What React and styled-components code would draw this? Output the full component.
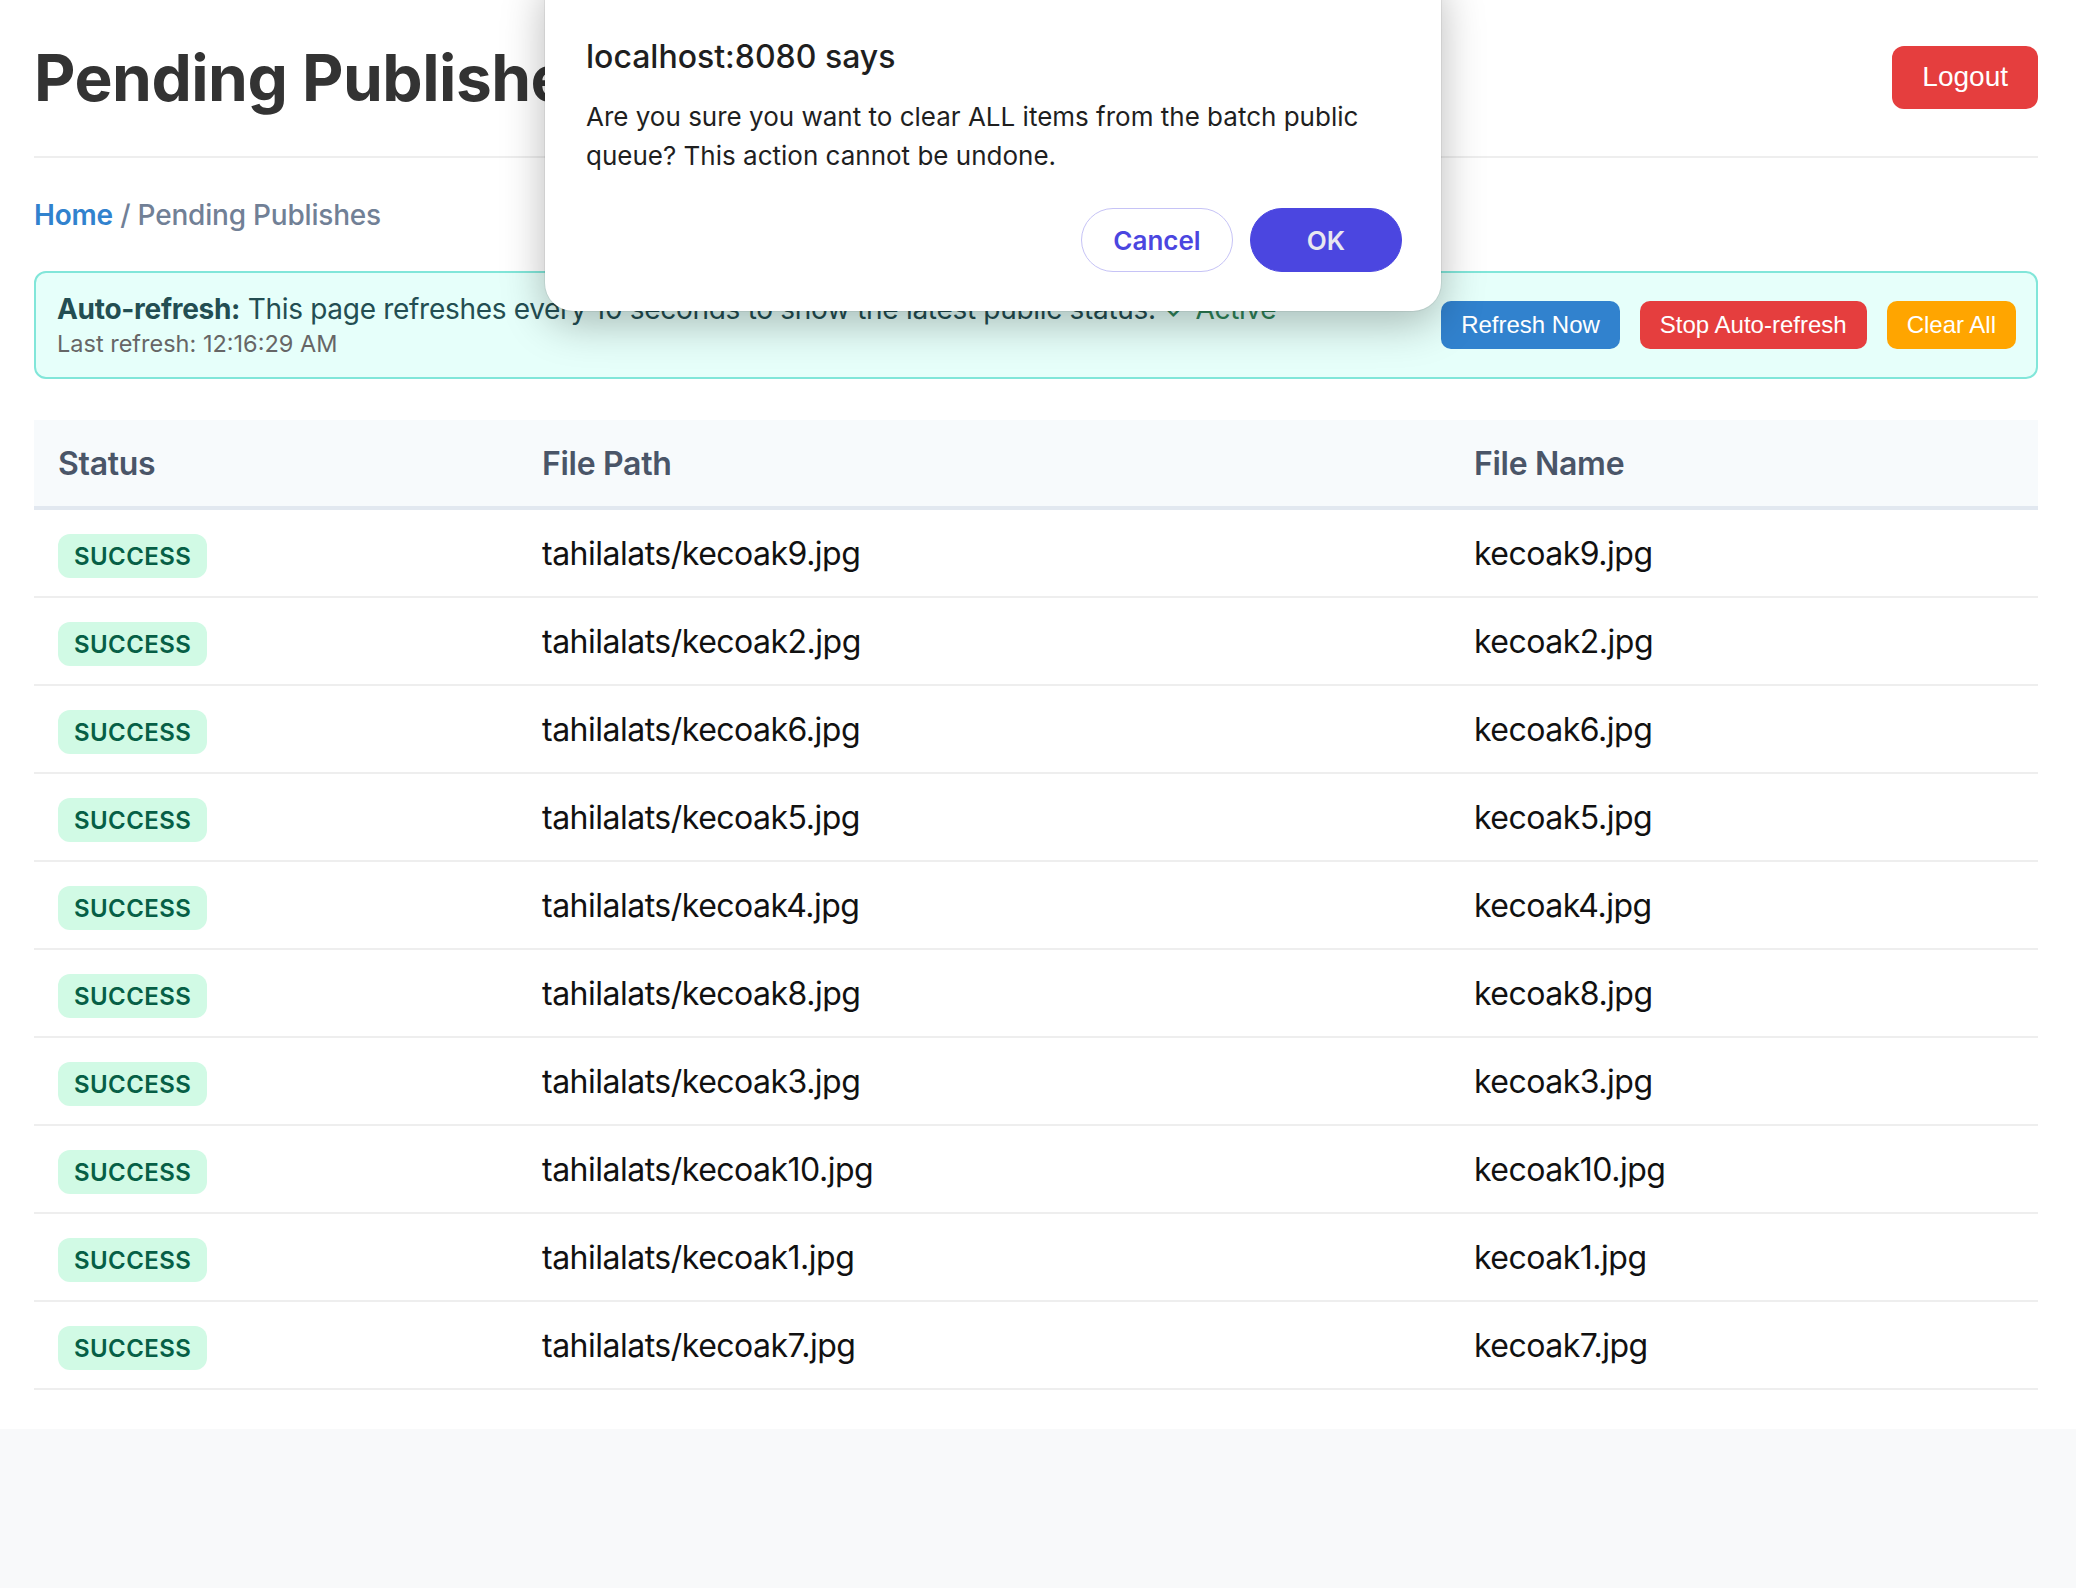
import styled, { createGlobalStyle } from 'styled-components';

const GlobalStyle = createGlobalStyle`
  html, body {
    margin: 0;
    padding: 0;
    background: #f8f9fa;
  }
  body {
    font-family: Inter, 'Noto Sans', sans-serif;
  }
`;

const rows = [
  'kecoak9.jpg',
  'kecoak2.jpg',
  'kecoak6.jpg',
  'kecoak5.jpg',
  'kecoak4.jpg',
  'kecoak8.jpg',
  'kecoak3.jpg',
  'kecoak10.jpg',
  'kecoak1.jpg',
  'kecoak7.jpg',
];

// white page sheet
const Page = styled.div`
  position: relative;
  background: #ffffff;
  padding: 39px 38px 39px 34px;
  overflow: hidden;
`;

const Header = styled.header`
  display: flex;
  justify-content: space-between;
  align-items: center;
  padding-bottom: 40px;
  border-bottom: 2px solid #eeeeee;
`;

const Title = styled.h1`
  margin: 0;
  font-size: 64px;
  line-height: 77px;
  font-weight: 700;
  color: #333333;
  letter-spacing: -0.5px;
`;

// page buttons use the browser default button font
const ActionButton = styled.button`
  font-family: 'Liberation Sans', Arial, sans-serif;
  font-size: ${(p) => (p.$large ? '28px' : '24px')};
  padding: ${(p) => (p.$large ? '15px 30px' : '10px 20px')};
  border-radius: ${(p) => (p.$large ? '12px' : '10px')};
  background: ${(p) => p.$color};
  color: #ffffff;
  border: none;
  cursor: pointer;
  line-height: 1.15;
`;

const Breadcrumb = styled.nav`
  margin: 40px 0 39px;
  font-size: 28px;
  line-height: 34px;
  font-weight: 500;
  color: #718096;
  letter-spacing: -0.2px;
`;

const HomeLink = styled.a`
  color: #3182ce;
  font-weight: 600;
  text-decoration: none;
`;

const RefreshBox = styled.div`
  display: flex;
  justify-content: space-between;
  align-items: center;
  background: #e6fffa;
  border: 2px solid #81e6d9;
  border-radius: 12px;
  padding: 19px 20px 19px 21px;
`;

const RefreshInfo = styled.div`
  display: flex;
  flex-direction: column;
  gap: 4px;
`;

const RefreshLine = styled.div`
  font-size: 28px;
  line-height: 34px;
  color: #234e52;
  letter-spacing: -0.3px;
`;

const Active = styled.span`
  color: #2f855a;
`;

const LastRefresh = styled.div`
  font-size: 23.5px;
  line-height: 28px;
  color: #666666;
`;

const ButtonGroup = styled.div`
  display: flex;
  gap: 20px;
`;

const Table = styled.table`
  width: 100%;
  margin-top: 41px;
  border-collapse: collapse;
  table-layout: fixed;
`;

const HeadCell = styled.th`
  width: ${(p) => p.$w || 'auto'};
  height: 86px;
  padding: 0 24px;
  text-align: left;
  background: #f7fafc;
  border-bottom: 4px solid #e2e8f0;
  font-size: 32px;
  font-weight: 600;
  color: #4a5568;
  letter-spacing: -0.3px;
`;

const Cell = styled.td`
  height: 86px;
  padding: 0 24px;
  border-bottom: 2px solid #eeeeee;
  font-size: 32px;
  color: #111111;
  letter-spacing: -0.5px;
  vertical-align: middle;
`;

const Badge = styled.span`
  display: inline-block;
  vertical-align: middle;
  margin-top: 5px;
  height: 44px;
  line-height: 45px;
  padding: 0 16px;
  border-radius: 12px;
  background: #d1fae5;
  color: #065f46;
  font-size: 24px;
  font-weight: 600;
  letter-spacing: 0.4px;
`;

// browser confirm() dialog lying over the page
const Dialog = styled.div`
  position: absolute;
  top: -30px;
  left: 545px;
  width: 896px;
  box-sizing: border-box;
  padding: 67px 39px 39px 41px;
  background: #ffffff;
  border-radius: 28px;
  box-shadow: 0 12px 44px rgba(0, 0, 0, 0.28), 0 0 0 1px rgba(0, 0, 0, 0.06);
`;

const DialogTitle = styled.div`
  font-size: 32px;
  line-height: 40px;
  font-weight: 500;
  color: #1f1f1f;
`;

const DialogMessage = styled.p`
  margin: 20px 0 0;
  max-width: 810px;
  font-size: 26px;
  line-height: 39px;
  color: #1f1f1f;
`;

const DialogActions = styled.div`
  display: flex;
  justify-content: flex-end;
  gap: 17px;
  margin-top: 33px;
`;

const DialogButton = styled.button`
  min-width: 152px;
  height: 64px;
  padding: 0 24px;
  border-radius: 32px;
  font-family: Inter, sans-serif;
  font-size: 26px;
  font-weight: 600;
  cursor: pointer;
  border: 1.5px solid ${(p) => (p.$primary ? '#4b46e0' : '#c6c3f6')};
  background: ${(p) => (p.$primary ? '#4b46e0' : '#ffffff')};
  color: ${(p) => (p.$primary ? '#e8e8f0' : '#4b46e0')};
`;

export default function App() {
  return (
    <>
      <GlobalStyle />
      <Page>
        <Header>
          <Title>Pending Publishes</Title>
          <ActionButton $large $color="#e53e3e">Logout</ActionButton>
        </Header>

        <Breadcrumb>
          <HomeLink href="#">Home</HomeLink> / Pending Publishes
        </Breadcrumb>

        <RefreshBox>
          <RefreshInfo>
            <RefreshLine>
              <strong>Auto-refresh:</strong> This page refreshes every 10 seconds to show the latest
              public status. <Active>✓ Active</Active>
            </RefreshLine>
            <LastRefresh>Last refresh: 12:16:29 AM</LastRefresh>
          </RefreshInfo>
          <ButtonGroup>
            <ActionButton $color="#3182ce">Refresh Now</ActionButton>
            <ActionButton $color="#e53e3e">Stop Auto-refresh</ActionButton>
            <ActionButton $color="#ffa500">Clear All</ActionButton>
          </ButtonGroup>
        </RefreshBox>

        <Table>
          <thead>
            <tr>
              <HeadCell $w="436px">Status</HeadCell>
              <HeadCell $w="884px">File Path</HeadCell>
              <HeadCell>File Name</HeadCell>
            </tr>
          </thead>
          <tbody>
            {rows.map((name) => (
              <tr key={name}>
                <Cell>
                  <Badge>SUCCESS</Badge>
                </Cell>
                <Cell>tahilalats/{name}</Cell>
                <Cell>{name}</Cell>
              </tr>
            ))}
          </tbody>
        </Table>

        <Dialog>
          <DialogTitle>localhost:8080 says</DialogTitle>
          <DialogMessage>
            Are you sure you want to clear ALL items from the batch public queue? This action
            cannot be undone.
          </DialogMessage>
          <DialogActions>
            <DialogButton>Cancel</DialogButton>
            <DialogButton $primary>OK</DialogButton>
          </DialogActions>
        </Dialog>
      </Page>
    </>
  );
}
